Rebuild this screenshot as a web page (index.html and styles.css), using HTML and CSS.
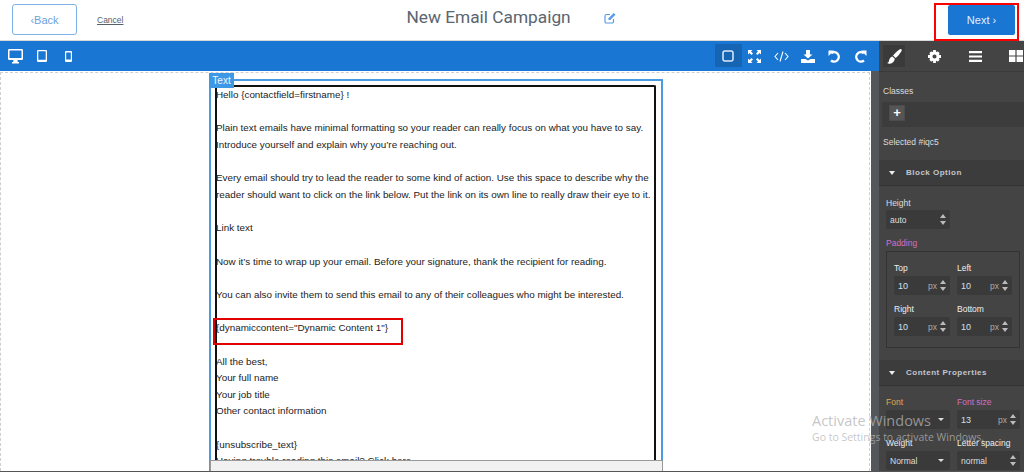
FILE: index.html
```html
<!DOCTYPE html>
<html lang="en">
<head>
<meta charset="utf-8">
<title>New Email Campaign</title>
<link rel="stylesheet" href="styles.css">
</head>
<body>
<div class="page">
  <header class="header">
    <a class="back">&lsaquo;Back</a>
    <a class="cancel">Cancel</a>
    <h1 class="title">New Email Campaign</h1>
    <svg class="edit" viewBox="0 0 12 12"><path d="M9.500 7v2.600a1.400 1.400 0 0 1-1.400 1.400H2.400A1.400 1.400 0 0 1 1 9.600V3.900a1.400 1.400 0 0 1 1.400-1.400H6" fill="none" stroke="#5b9be8" stroke-width="1.200"/><path d="M4.500 6.200 9.700 1l1.800 1.800L6.300 8H4.500z" fill="#5b9be8"/></svg>
    <a class="next">Next &rsaquo;</a>
    <div class="next-mark"></div>
  </header>

  <div class="topbar">
    <div class="tools">
      <span class="tool"><svg width="15" height="15" viewBox="0 0 15 15"><path d="M1.300 0h12.400A1.300 1.300 0 0 1 15 1.300v8.400A1.300 1.300 0 0 1 13.700 11H9.500l.3 2h1.200v1.500H4V13h1.200l.3-2H1.300A1.300 1.300 0 0 1 0 9.700V1.300A1.300 1.300 0 0 1 1.300 0zM1.500 1.500v7.500h12V1.500z" fill="#fff" fill-rule="evenodd"/></svg></span>
      <span class="tool"><svg width="10" height="12" viewBox="0 0 10 12"><path d="M1.200 0h7.600A1.200 1.200 0 0 1 10 1.200v9.600A1.200 1.200 0 0 1 8.800 12H1.200A1.200 1.200 0 0 1 0 10.800V1.200A1.200 1.200 0 0 1 1.200 0zM1.300 1.300v8.500h7.400V1.300z" fill="#fff" fill-rule="evenodd"/></svg></span>
      <span class="tool"><svg width="7" height="11" viewBox="0 0 7 11"><path d="M1 0h5a1 1 0 0 1 1 1v9a1 1 0 0 1-1 1H1a1 1 0 0 1-1-1V1a1 1 0 0 1 1-1zM1.200 1.500v7h4.600v-7z" fill="#fff" fill-rule="evenodd"/></svg></span>
    </div>
    <div class="tools tools-right">
      <span class="tool tool-active"><svg width="12" height="12" viewBox="0 0 12 12"><rect x="1" y="1" width="10" height="10" rx="2" fill="none" stroke="#dfeaf6" stroke-width="1.500"/></svg></span>
      <span class="tool"><svg width="13" height="13" viewBox="0 0 13 13"><path d="M0 0h4.500L3 1.500 5 3.500 3.500 5 1.500 3 0 4.500zM13 0v4.500L11.500 3 9.500 5 8 3.500 10 1.500 8.500 0zM0 13V8.500L1.500 10l2-2L5 9.500l-2 2L4.500 13zM13 13H8.500l1.500-1.500-2-2L9.500 8l2 2L13 8.500z" fill="#fff"/></svg></span>
      <span class="tool"><svg width="15" height="11" viewBox="0 0 15 11"><path d="M4 2 1 5.500 4 9M11 2l3 3.500L11 9M9 .5 6 10.500" fill="none" stroke="#fff" stroke-width="1.100"/></svg></span>
      <span class="tool"><svg width="14" height="13" viewBox="0 0 14 13"><path d="M5 0h4v4.500h2.500L7 8.500 2.500 4.500H5zM0 9h4.500L7 10.500 9.500 9H14v4H0z" fill="#fff"/></svg></span>
      <span class="tool"><svg width="13" height="13" viewBox="0 0 13 13"><path d="M3.200 3.200A4.700 4.700 0 1 1 3 10.500" fill="none" stroke="#fff" stroke-width="2.400"/><path d="M.5 .5 6 .5 .5 6z" fill="#fff"/></svg></span>
      <span class="tool"><svg width="13" height="13" viewBox="0 0 13 13"><path d="M9.800 3.200A4.700 4.700 0 1 0 10 10.500" fill="none" stroke="#fff" stroke-width="2.400"/><path d="M12.500 .5 7 .5 12.500 6z" fill="#fff"/></svg></span>
    </div>
    <div class="tabs">
      <span class="tab tab-active"><svg width="15" height="15" viewBox="0 0 15 15"><path d="M14.300.3c.6.500.5 1.300 0 2.100C12.800 4.800 10.500 7.600 8.600 9.100L6 6.600C7.700 4.500 10.300 2.200 12.500.6c.7-.5 1.300-.7 1.800-.3zM5.400 7.400l2.400 2.400c-.2 2.400-2 4.700-5 4.900-1 .1-2.200-.2-2.800-.9 1.300-.1 1.800-.9 2-2.100.3-2.300 1.700-4 3.400-4.300z" fill="#fff"/></svg></span>
      <span class="tab"><svg width="13" height="13" viewBox="0 0 14 14"><circle cx="7" cy="7" r="3.800" fill="none" stroke="#fff" stroke-width="3.200"/><path d="M5.500 0h3v3h-3zM5.500 11h3v3h-3zM0 5.500h3v3H0zM11 5.500h3v3h-3zM1.400 3.500 3.500 1.400 5 3 3 5zM12.600 3.500 10.500 1.400 9 3 11 5zM1.400 10.500 3.500 12.600 5 11 3 9zM12.600 10.500 10.500 12.600 9 11 11 9z" fill="#fff"/></svg></span>
      <span class="tab"><svg width="13" height="11" viewBox="0 0 13 11"><path d="M0 0h13v2.200H0zM0 4.400h13v2.200H0zM0 8.800h13V11H0z" fill="#fff"/></svg></span>
      <span class="tab"><svg width="14" height="12" viewBox="0 0 14 12"><path d="M0 0h6.400v5.400H0zM7.600 0H14v5.400H7.600zM0 6.600h6.400V12H0zM7.600 6.600H14V12H7.600z" fill="#fff"/></svg></span>
    </div>
  </div>

  <div class="workspace">
    <main class="canvas">
      <div class="frame">
        <div class="selection">
          <span class="badge">Text</span>
          <div class="mail">
            <p>Hello {contactfield=firstname} !</p>
            <p>&nbsp;</p>
            <p>Plain text emails have minimal formatting so your reader can really focus on what you have to say.</p>
            <p>Introduce yourself and explain why you’re reaching out.</p>
            <p>&nbsp;</p>
            <p>Every email should try to lead the reader to some kind of action. Use this space to describe why the</p>
            <p>reader should want to click on the link below. Put the link on its own line to really draw their eye to it.</p>
            <p>&nbsp;</p>
            <p>Link text</p>
            <p>&nbsp;</p>
            <p>Now it’s time to wrap up your email. Before your signature, thank the recipient for reading.</p>
            <p>&nbsp;</p>
            <p>You can also invite them to send this email to any of their colleagues who might be interested.</p>
            <p>&nbsp;</p>
            <p>{dynamiccontent="Dynamic Content 1"}</p>
            <p>&nbsp;</p>
            <p>All the best,</p>
            <p>Your full name</p>
            <p>Your job title</p>
            <p>Other contact information</p>
            <p>&nbsp;</p>
            <p>{unsubscribe_text}</p>
            <p>Having trouble reading this email? Click here.</p>
          </div>
        </div>
      </div>
      <div class="dyn-mark"></div>
      <div class="strip"></div>
    </main>

    <aside class="panel">
      <div class="panel-main">
        <div class="label classes-label">Classes</div>
        <div class="classes-box"><span class="plus">+</span></div>
        <div class="label selected">Selected #iqc5</div>

        <div class="band band-block"><span class="caret"></span>Block Option</div>
        <div class="props">
          <div class="label height-label">Height</div>
          <div class="field field-wide"><span>auto</span><i class="spin"></i></div>
          <div class="label pink padding-label">Padding</div>
          <div class="padbox">
            <div class="cell"><div class="label">Top</div><div class="field"><b>10</b><em>px</em><i class="spin"></i></div></div>
            <div class="cell"><div class="label">Left</div><div class="field"><b>10</b><em>px</em><i class="spin"></i></div></div>
            <div class="cell"><div class="label">Right</div><div class="field"><b>10</b><em>px</em><i class="spin"></i></div></div>
            <div class="cell"><div class="label">Bottom</div><div class="field"><b>10</b><em>px</em><i class="spin"></i></div></div>
          </div>
        </div>

        <div class="band band-content"><span class="caret"></span>Content Properties</div>
        <div class="font-grid">
          <div class="cell"><div class="label orange">Font</div><div class="field"><span></span><i class="down"></i></div></div>
          <div class="cell"><div class="label pink">Font size</div><div class="field"><b>13</b><em>px</em><i class="spin"></i></div></div>
          <div class="cell"><div class="label">Weight</div><div class="field"><span>Normal</span><i class="down"></i></div></div>
          <div class="cell"><div class="label">Letter spacing</div><div class="field"><span>normal</span><i class="spin"></i></div></div>
        </div>
      </div>
    </aside>
  </div>

  <div class="watermark">
    <div class="wm-1">Activate Windows</div>
    <div class="wm-2">Go to Settings to activate Windows.</div>
  </div>
</div>
</body>
</html>
```

FILE: styles.css
```css
* { box-sizing: border-box; }
html, body { margin: 0; padding: 0; }
body { background: #fff; font-family: "Liberation Sans", Arial, sans-serif; overflow: hidden; }
.page { position: relative; width: 1024px; height: 472px; overflow: hidden; display: flex; flex-direction: column; }

/* header */
.header { height: 41px; flex: none; display: flex; align-items: flex-start; border-bottom: 1px solid #d9d9d9; padding-left: 12px; position: relative; }
.back { width: 65px; height: 31px; margin-top: 4px; border: 1px solid #7fb0e8; border-radius: 3px; color: #6d9fdc; font-size: 11px; display: flex; align-items: center; justify-content: center; }
.cancel { margin: 15px 0 0 20px; font-size: 8.500px; color: #56606a; text-decoration: underline; line-height: 11px; }
.title { margin: 5px 0 0 283px; font: 400 17.300px/24px Roboto, sans-serif; color: #5a6570; white-space: nowrap; }
.edit { width: 12px; height: 12px; margin: 12px 0 0 33px; }
.next { margin: 5px 9px 0 auto; width: 67px; height: 30px; background: #1976d2; border-radius: 2px; color: #e4effa; font-size: 11px; display: flex; align-items: center; justify-content: center; }
.next-mark { position: absolute; left: 934px; top: 3px; width: 85px; height: 38px; border: 2px solid #f00; }

/* toolbar */
.topbar { height: 30px; flex: none; display: flex; background: #1976d2; }
.tools { display: flex; padding-left: 2px; }
.tools-right { margin-left: auto; padding: 0 5px 0 0; }
.tool { width: 26.500px; height: 30px; display: flex; align-items: center; justify-content: center; }
.tool-active { background: #1565b4; height: 23px; margin-top: 3px; }
.tabs { width: 145px; flex: none; background: #444; display: flex; gap: 18.500px; padding: 4px 0 0 4px; overflow: hidden; }
.tab { width: 22px; height: 22px; flex: none; display: flex; align-items: center; justify-content: center; }
.tab-active { background: #3a3a3a; }

/* canvas */
.workspace { flex: 1; min-height: 0; display: flex; border-bottom: 1px solid #555; }
.canvas { width: 871px; flex: none; position: relative; overflow: hidden; padding: 1px 1px 0 0; }
.frame { height: 100%; border: 1px dashed #cfcfcf; border-bottom: 0; padding: 6px 0 0 208px; overflow: hidden; }
.selection { position: relative; width: 454px; height: 400px; border: 2px solid #4a9ae0; border-bottom: 0; padding: 4px 5px 0 4px; }
.badge { position: absolute; left: -2px; top: -8px; width: 25px; height: 15px; background: #3d98e6; color: #eef6fd; font-size: 10px; line-height: 15px; text-align: center; }
.mail { height: 400px; width: 441px; border: 2px solid #111; border-radius: 2px; border-bottom: 0; font-size: 9.850px; line-height: 16.650px; color: #222; }
.mail p { margin: 0 0 0 -1px; white-space: nowrap; }
.dyn-mark { position: absolute; left: 213px; top: 247px; width: 190px; height: 27px; border: 2px solid #e00000; }
.strip { position: absolute; left: 210px; bottom: 0; width: 453px; height: 11px; background: #f1f1f1; border: 1px solid #999; border-bottom: 0; }

/* side panel */
.panel { flex: 1; background: #53565a; padding-left: 8px; min-width: 0; }
.panel-main { height: 100%; background: #444; border-top: 1px solid #3a3a3a; overflow: hidden; }
.label { font-size: 8.500px; line-height: 11px; color: #ddd; white-space: nowrap; }
.classes-label { margin: 14px 0 0 4px; }
.classes-box { height: 25px; margin: 5px 0 0 3px; background: #3c3c3c; padding: 3px 0 0 7px; }
.plus { display: block; width: 16px; height: 16px; background: #555; border: 1px solid #4c4c4c; color: #fff; font: 700 13px/13px "Liberation Sans", sans-serif; text-align: center; }
.selected { margin: 10px 0 0 4px; }
.band { height: 26px; background: #3c3c3c; border-bottom: 1px solid #333; color: #c4c6d0; font-size: 8px; font-weight: 700; letter-spacing: .5px; line-height: 25px; padding-left: 10px; display: flex; align-items: center; white-space: nowrap; }
.band-block { margin-top: 12px; }
.caret { width: 0; height: 0; border: 3px solid transparent; border-top: 4px solid #eee; border-bottom: 0; margin-right: 11px; }
.band-content { margin-top: 12px; }
.props { padding: 12px 4px 0 7px; }
.field { height: 19px; background: #3a3a3a; border-radius: 2px; display: flex; align-items: center; padding: 0 4px; font-size: 8.500px; color: #ddd; }
.field-wide { width: 64px; margin-top: 1px; }
.field span { flex: 1; }
.field b { flex: 1; font-weight: 400; color: #cfe0f0; font-size: 9px; }
.field em { font-style: normal; color: #aaa; margin-right: 3px; font-size: 8.500px; }
.spin { width: 6px; height: 11px; flex: none; position: relative; }
.spin::before, .spin::after { content: ""; position: absolute; left: 0; border: 3px solid transparent; }
.spin::before { top: 0; border-bottom: 4px solid #bbb; border-top: 0; }
.spin::after { bottom: 0; border-top: 4px solid #bbb; border-bottom: 0; }
.down { width: 0; height: 0; flex: none; border: 3px solid transparent; border-top: 3px solid #ddd; border-bottom: 0; margin-right: 2px; }
.pink { color: #d070c8; }
.orange { color: #e0a850; }
.padding-label { margin-top: 9px; }
.padbox { width: 134px; height: 97px; margin-top: 2px; border: 1px solid #333; padding: 11px 7px 0; display: grid; grid-template-columns: 56px 55px; column-gap: 7px; grid-auto-rows: 41px; }
.cell .label { margin-bottom: 2px; color: #eee; }
.cell .orange { color: #e0a850; }
.cell .pink { color: #d070c8; }
.font-grid { padding: 11px 4px 0 7px; display: grid; grid-template-columns: 64px 63px; column-gap: 7px; grid-auto-rows: 41px; }

/* overlay */
.watermark { position: absolute; left: 812px; top: 412px; color: rgba(180,180,180,.75); font-family: "Open Sans", sans-serif; white-space: nowrap; pointer-events: none; }
.wm-1 { font-size: 14.500px; line-height: 18px; }
.wm-2 { font-size: 10.500px; line-height: 15px; }
```
